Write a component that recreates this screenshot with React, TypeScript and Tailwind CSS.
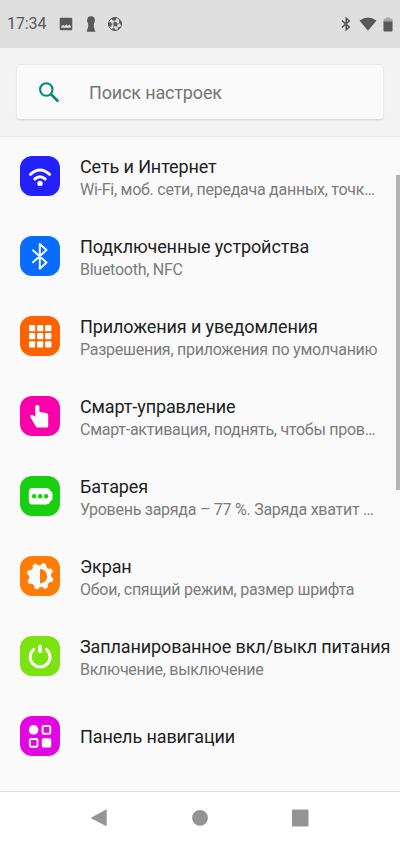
import type { ReactNode } from "react";

type Item = { title: string; sub?: string; bg: string; icon: ReactNode };

const gearTeeth = [0, 45, 90, 135, 180, 225, 270, 315];

const items: Item[] = [
  {
    title: "Сеть и Интернет",
    sub: "Wi-Fi, моб. сети, передача данных, точк…",
    bg: "bg-[#2420fb]",
    icon: (
      <g fill="none" stroke="#fff" strokeWidth="3" strokeLinecap="round">
        <path d="M10.4 18.3 Q20 9.600 29.600 18.300" />
        <path d="M14.800 23 Q20 18.600 25.200 23" />
        <circle cx="20" cy="27.400" r="2.700" fill="#fff" stroke="none" />
      </g>
    ),
  },
  {
    title: "Подключенные устройства",
    sub: "Bluetooth, NFC",
    bg: "bg-[#0a6cff]",
    icon: (
      <path
        d="M13 14.300 26.500 26.600 19.800 32.700V7.900L26.500 14 13 26.300"
        fill="none" stroke="#f2f8ff" strokeWidth="2" strokeLinejoin="round" strokeLinecap="round"
      />
    ),
  },
  {
    title: "Приложения и уведомления",
    sub: "Разрешения, приложения по умолчанию",
    bg: "bg-[#ff6200]",
    icon: (
      <g fill="#fff">
        {[9, 17.1, 25.2].map((y) =>
          [9, 17.1, 25.2].map((x) => <rect key={`${x}-${y}`} x={x} y={y} width="6.2" height="6.2" rx="1" />),
        )}
      </g>
    ),
  },
  {
    title: "Смарт-управление",
    sub: "Смарт-активация, поднять, чтобы пров…",
    bg: "bg-[#fb00aa]",
    icon: (
      <path
        d="M15.200 10.900c0-2.600 4.200-2.600 4.200 0v4.900l6.700 1.200c1.300.3 2.100 1.100 2.100 2.500v10.500c0 1-.6 1.600-1.600 1.600h-8.400c-1.200 0-1.900-.4-2.500-1.300l-5.300-9c-1-1.900.9-3.300 2.500-2.100l2.300 1.600z"
        fill="#fafcff"
      />
    ),
  },
  {
    title: "Батарея",
    sub: "Уровень заряда – 77 %. Заряда хватит …",
    bg: "bg-[#18cf12]",
    icon: (
      <>
        <path d="M12.600 12h13.600q3.200 0 4 2.700l1.300.9q1 .8 1 2v5q0 1.200-1 2l-1.300.9q-.8 3-4 3H12.600q-3.800 0-3.800-3.800V15.800q0-3.800 3.800-3.800z" fill="#fff" />
        <g fill="#18cf12">
          <circle cx="14.100" cy="20.200" r="2.250" />
          <circle cx="20.100" cy="20.200" r="2.250" />
          <circle cx="26.100" cy="20.200" r="2.250" />
        </g>
      </>
    ),
  },
  {
    title: "Экран",
    sub: "Обои, спящий режим, размер шрифта",
    bg: "bg-[#ff7c05]",
    icon: (
      <>
        <g fill="#f8fbff">
          <circle cx="20.200" cy="20.200" r="11" />
          {gearTeeth.map((a) => (
            <path key={a} d="M17 10.600 18.100 7.500Q18.400 6.700 19.200 6.700h2q.8 0 1.100.8l1.100 3.100z" transform={`rotate(${a + 18} 20.200 20.200)`} />
          ))}
        </g>
        <path d="M20 13a7.200 7.200 0 0 1 0 14.400z" fill="#ff7c05" />
      </>
    ),
  },
  {
    title: "Запланированное вкл/выкл питания",
    sub: "Включение, выключение",
    bg: "bg-[#7be30f]",
    icon: (
      <g fill="none" stroke="#fff" strokeLinecap="round">
        <path d="M13.800 13.300a9.900 9.900 0 1 0 12.600 0" strokeWidth="3" />
        <path d="M20.100 10.400v4.800" strokeWidth="3.800" />
      </g>
    ),
  },
  {
    title: "Панель навигации",
    bg: "bg-[#e106e2]",
    icon: (
      <>
        <circle cx="13.600" cy="13.800" r="4.800" fill="#fff" />
        <rect x="21.800" y="22.200" width="9.400" height="9.400" rx="1.600" fill="#fff" />
        <g fill="none" stroke="#fff" strokeWidth="1.900">
          <rect x="22.600" y="10" width="7.700" height="7.700" rx="1.200" />
          <rect x="9.800" y="23" width="7.700" height="7.700" rx="1.200" />
        </g>
      </>
    ),
  },
];

function StatusBar() {
  return (
    <div className="flex h-12 shrink-0 items-center bg-[#dfdfdf] px-[7px] text-[#595959]">
      <span className="w-[52px] text-[16px] leading-none tracking-[-0.1px]">17:34</span>
      <svg className="h-[14px] w-[14px]" viewBox="0 0 14 14" fill="currentColor">
        <path fillRule="evenodd" d="M2 .7h10q1.300 0 1.300 1.300v10q0 1.300-1.300 1.300H2Q.7 13.300.7 12V2Q.7.7 2 .7zM2.200 10.800h9.600V9L10.200 7.500 8.800 8.900 7.500 7.200 5.500 9 4.200 7.800 2.200 9.600z" />
      </svg>
      <svg className="ml-[12px] h-[16px] w-[12px]" viewBox="0 0 12 16" fill="currentColor">
        <circle cx="6" cy="4.200" r="3.900" />
        <path d="M3 6h6l-.3 4 1.600 5.700H1.700L3.300 10z" />
      </svg>
      <svg className="ml-[10px] h-[16px] w-[16px]" viewBox="0 0 16 16">
        <circle cx="8" cy="8" r="6.500" fill="#dfdfdf" stroke="#595959" strokeWidth="1" />
        <g fill="#595959">
          <path d="M6.300 6.400 9 5.700 10.900 7.900 9.600 10.500 6.600 10.100z" />
          <path d="M4.500 2.200 8.300 1 9.800 2.700 7.900 4.700 5.200 4.200zM12 3.300 14.600 6.300 14.400 9 12.300 7.500zM1.200 6.900 3.800 5.900 5 8.300 3.900 10.700 1.800 10.400zM4.600 12.500 7.300 12.100 8.900 14.600 6.500 14.500zM11.300 11.200 13.900 10.800 12 13.400 10.400 13.600z" />
        </g>
        <path d="M7.900 4.700 7.700 6M10.900 7.900 12.300 7.500M9.600 10.500 11.300 11.700M6.600 10.100 6.900 12.200M5 8.300 6.300 7.500" stroke="#8a8a8a" strokeWidth=".8" />
      </svg>
      <svg className="ml-auto h-[16px] w-[12px]" viewBox="0 0 12 16" fill="none" stroke="currentColor" strokeWidth="1.500">
        <path d="M2 4.600 9.300 11.100 6.200 13.900V2.100L9.300 4.900 2 11.400" />
      </svg>
      <svg className="ml-[7px] h-[14px] w-[18px]" viewBox="0 0 18 14" fill="currentColor">
        <path d="M.5 3.400Q9-2.200 17.500 3.400L9 13.700z" />
      </svg>
      <svg className="ml-[6px] h-[15px] w-[10px]" viewBox="0 0 10 15">
        <path d="M.5 5V2.300q0-.6.6-.6h2V.5h3.800v1.200h2q.6 0 .6.600V5z" fill="#a5a5a5" />
        <path d="M.5 4.600h9v9.300q0 .6-.6.600H1.100q-.6 0-.6-.6z" fill="currentColor" />
      </svg>
    </div>
  );
}

export default function App() {
  return (
    <div className="relative flex h-[844px] w-[400px] flex-col overflow-hidden bg-[#fafafa] font-[Roboto,sans-serif]">
      <StatusBar />
      <header className="h-[88px] shrink-0 bg-[#f3f3f3] px-[17px] pt-[17px] shadow-[0_1px_1px_#e8e8e8]">
        <div className="flex h-[54px] items-center rounded-[2px] bg-[#fafafa] pl-[21px] shadow-[0_0.5px_2px_#d0d0d0]">
          <svg className="h-[22px] w-[22px]" viewBox="0 0 22 22" fill="none" stroke="#05897b" strokeWidth="2.100">
            <circle cx="8.300" cy="8.500" r="6.200" />
            <path d="M12.800 13 20.300 20.500" strokeWidth="2.600" />
          </svg>
          <span className="ml-[29px] text-[18px] tracking-[-0.15px] text-[#757575]">Поиск настроек</span>
        </div>
      </header>
      <main className="min-h-0 flex-1">
        {items.map((it) => (
          <div key={it.title} className="flex h-20 items-center pl-5">
            <div className={`h-10 w-10 shrink-0 overflow-hidden rounded-[12px] ${it.bg}`}>
              <svg className="h-10 w-10" viewBox="0 0 40 40">{it.icon}</svg>
            </div>
            <div className="ml-5 whitespace-nowrap pt-[2px]">
              <div className="text-[18px] leading-6 tracking-[-0.11px] text-[#212121]">{it.title}</div>
              {it.sub && <div className="mt-px text-[16px] leading-[19px] tracking-[-0.26px] text-[#7b7b7b]">{it.sub}</div>}
            </div>
          </div>
        ))}
      </main>
      <div className="absolute right-0 top-[175px] h-[315px] w-[4px] bg-[#b3b3b3]" />
      <nav className="flex h-[53px] shrink-0 items-center justify-between border-t border-[#dedede] bg-white px-[90px] pb-px">
        <svg className="h-[18px] w-[18px]" viewBox="0 0 18 18" fill="#949494">
          <path d="M1.500 8.500 16 .4q.7-.3.7.4v16q0 .7-.7.3L1.500 9.500q-.8-.5 0-1z" />
        </svg>
        <svg className="h-[18px] w-[18px]" viewBox="0 0 18 18" fill="#949494">
          <circle cx="9" cy="8.900" r="7.900" />
        </svg>
        <svg className="h-[18px] w-[18px]" viewBox="0 0 18 18" fill="#949494">
          <rect x="-.4" y=".5" width="16.900" height="16.900" rx="1" />
        </svg>
      </nav>
    </div>
  );
}
